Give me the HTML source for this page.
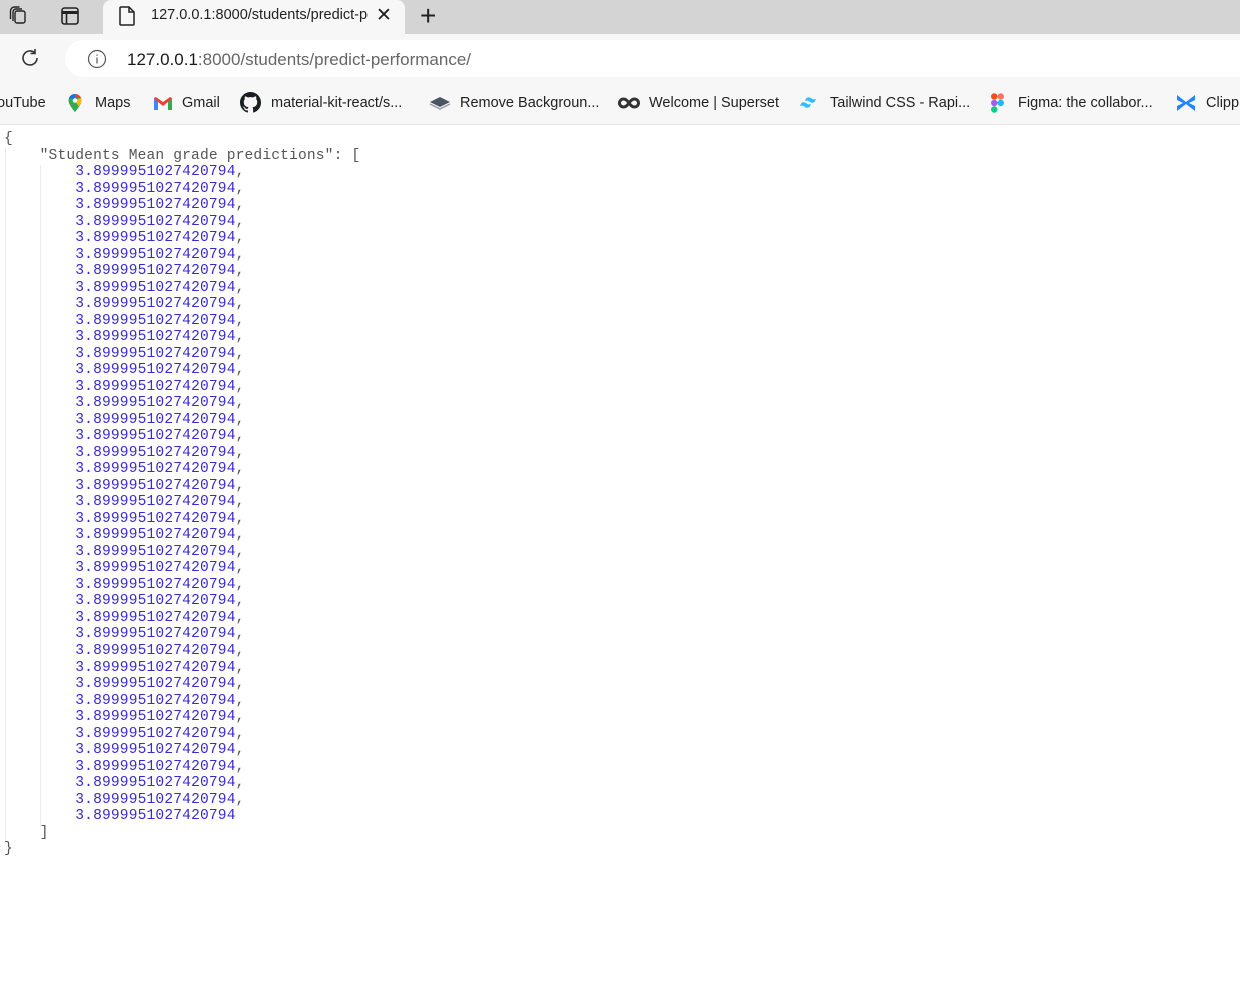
<!DOCTYPE html>
<html><head><meta charset="utf-8"><style>
*{margin:0;padding:0;box-sizing:border-box}
body{width:1240px;height:981px;overflow:hidden;background:#fff;font-family:"Liberation Sans",sans-serif;position:relative}
.tabbar{position:absolute;left:0;top:0;width:1240px;height:34px;background:#d4d4d4}
.tab{position:absolute;left:103px;top:0;width:302px;height:36px;background:#f7f7f7;border-radius:8px 8px 0 0}
.toolbar{position:absolute;left:0;top:34px;width:1240px;height:91px;background:#f7f7f7;border-bottom:1px solid #e6e6e6}
.addr{position:absolute;left:65px;top:40px;width:1200px;height:37px;background:#fff;border-radius:19px}
.t{position:absolute;font-size:15px;color:#222;white-space:nowrap}
.bm{position:absolute;top:95px;font-size:14.5px;color:#222;white-space:nowrap}
pre{position:absolute;left:4px;top:131px;font-family:"Liberation Mono",monospace;font-size:14.6px;line-height:16.51px;color:#555;letter-spacing:0.15px}
.n{color:#3a2ad4}
.g{position:absolute;width:1px;background:#ececec}
</style></head><body>
<div class="tabbar"></div>
<div class="tab"></div>
<svg style="position:absolute;left:7px;top:5px" width="22" height="22" viewBox="0 0 22 22" fill="none" stroke="#222" stroke-width="1.4"><rect x="8" y="6" width="10" height="12" rx="2"/><path d="M6 16 V7 a3 3 0 0 1 3-3 h6"/><path d="M3.5 14 V6 a4 4 0 0 1 4-4 h5"/></svg>
<svg style="position:absolute;left:59px;top:5px" width="22" height="22" viewBox="0 0 22 22" fill="none" stroke="#222" stroke-width="1.6"><rect x="3" y="3" width="16" height="16" rx="2.5"/><path d="M3 7.5h16" stroke-width="3"/><path d="M7.5 8v11"/></svg>
<svg style="position:absolute;left:118px;top:5px" width="18" height="22" viewBox="0 0 18 22" fill="none" stroke="#222" stroke-width="1.5"><path d="M3 2h8l5 5v12a1 1 0 0 1-1 1H3a1 1 0 0 1-1-1V3a1 1 0 0 1 1-1z"/><path d="M11 2v5h5"/></svg>
<div class="t" style="left:151px;top:7px;font-size:14.5px;width:217px;overflow:hidden">127.0.0.1:8000/students/predict-performance</div>
<div class="t" style="left:376px;top:4px;font-size:19px">✕</div>
<div class="t" style="left:420px;top:0px;font-size:28px;font-weight:300">+</div>
<div class="toolbar"></div>
<div class="addr"></div>
<svg style="position:absolute;left:19px;top:47px" width="22" height="22" viewBox="0 0 22 22" fill="none" stroke="#333" stroke-width="1.6"><path d="M18 11a7 7 0 1 1-2.5-5.4"/><path d="M16 2v4.5h-4.5"/></svg>
<svg style="position:absolute;left:87px;top:49px" width="20" height="20" viewBox="0 0 20 20" fill="none" stroke="#555" stroke-width="1.2"><circle cx="10" cy="10" r="8.5"/><path d="M10 8.5v6M10 5.5v1.2"/></svg>
<div class="t" style="left:127px;top:50px;font-size:17px;color:#1a1a1a">127.0.0.1<span style="color:#666">:8000/students/predict-performance/</span></div>
<div class="bm" style="left:-3px">ouTube</div>
<svg style="position:absolute;left:67px;top:93px" width="16" height="20" viewBox="0 0 16 20"><path d="M8 1a6.5 6.5 0 0 0-6.5 6.5c0 4.5 6.5 11.5 6.5 11.5s6.5-7 6.5-11.5A6.5 6.5 0 0 0 8 1z" fill="#34a853"/><path d="M2 5a6.5 6.5 0 0 1 6-4v6z" fill="#1a73e8"/><path d="M8 1a6.5 6.5 0 0 1 6 4H8z" fill="#ea4335"/><path d="M14 5c.5 1 .5 2 .5 2.5 0 2-1.5 4-3 6L8 7z" fill="#fbbc04"/><circle cx="8" cy="7.5" r="2.3" fill="#fff"/></svg>
<div class="bm" style="left:95px">Maps</div>
<svg style="position:absolute;left:153px;top:96px" width="20" height="15" viewBox="0 0 20 15"><path d="M1 2v12h4V6l5 4 5-4v8h4V2l-2-1-7 5-7-5z" fill="#ea4335"/><path d="M1 2v12h4V6z" fill="#4285f4"/><path d="M15 6v8h4V2z" fill="#34a853"/></svg>
<div class="bm" style="left:182px">Gmail</div>
<svg style="position:absolute;left:240px;top:92px" width="21" height="21" viewBox="0 0 16 16"><path fill="#1b1f23" d="M8 0C3.580 0 0 3.58 0 8c0 3.54 2.29 6.53 5.47 7.59.4.07.55-.17.55-.38v-1.33c-2.230.48-2.7-1.07-2.7-1.07-.36-.92-.89-1.17-.89-1.170-.73-.5.05-.49.05-.49.8.06 1.23.83 1.23.83.71 1.22 1.87.87 2.33.66.07-.52.28-.87.5-1.07-1.78-.2-3.64-.89-3.64-3.95 0-.87.31-1.59.82-2.15-.08-.2-.36-1.02.08-2.12 0 0 .67-.21 2.2.82a7.6 7.6 0 0 1 4 0c1.53-1.04 2.2-.82 2.2-.82.44 1.1.16 1.92.08 2.12.51.56.82 1.27.82 2.15 0 3.07-1.87 3.75-3.65 3.95.29.25.54.73.54 1.48v2.2c0 .21.15.46.55.38A8 8 0 0 0 16 8c0-4.42-3.58-8-8-8z"/></svg>
<div class="bm" style="left:271px">material-kit-react/s...</div>
<svg style="position:absolute;left:429px;top:96px" width="22" height="14" viewBox="0 0 22 14"><path d="M11 1L21 6 11 11 1 6z" fill="#4a5560"/><path d="M1 8l10 5 10-5" fill="none" stroke="#99a" stroke-width="1.5"/></svg>
<div class="bm" style="left:460px">Remove Backgroun...</div>
<svg style="position:absolute;left:618px;top:97px" width="22" height="12" viewBox="0 0 22 12" fill="none" stroke="#333" stroke-width="3"><path d="M11 6C9 3 7.5 2 5.5 2a4 4 0 0 0 0 8c2 0 3.5-1 5.5-4s3.5-4 5.5-4a4 4 0 0 1 0 8c-2 0-3.5-1-5.5-4z"/></svg>
<div class="bm" style="left:649px">Welcome | Superset</div>
<svg style="position:absolute;left:799px;top:96px" width="22" height="14" viewBox="0 0 22 14" fill="#38bdf8"><path d="M6 5c1-4 3.5-4.5 6-3 1.5 1 2.5 2 5 1-1 4-3.5 4.5-6 3-1.5-1-2.5-2-5-1zM1 10c1-4 3.5-4.5 6-3 1.5 1 2.5 2 5 1-1 4-3.5 4.5-6 3-1.5-1-2.5-2-5-1z"/></svg>
<div class="bm" style="left:830px">Tailwind CSS - Rapi...</div>
<svg style="position:absolute;left:991px;top:93px" width="13" height="20" viewBox="0 0 12 18"><rect x="0" y="0" width="6" height="6" rx="3" fill="#f24e1e"/><rect x="6" y="0" width="6" height="6" rx="3" fill="#ff7262"/><rect x="0" y="6" width="6" height="6" rx="3" fill="#a259ff"/><circle cx="9" cy="9" r="3" fill="#1abcfe"/><rect x="0" y="12" width="6" height="6" rx="3" fill="#0acf83"/></svg>
<div class="bm" style="left:1018px">Figma: the collabor...</div>
<svg style="position:absolute;left:1175px;top:92px" width="22" height="22" viewBox="0 0 22 22"><path d="M2 3l9 7 9-7v5l-6 3 6 3v5l-9-7-9 7v-5l6-3-6-3z" fill="#2684ff"/></svg>
<div class="bm" style="left:1206px">Clipp</div>
<div class="g" style="left:40px;top:165px;height:662px"></div>
<div class="g" style="left:5px;top:148px;height:696px"></div>
<pre>{
    "Students Mean grade predictions": [
        <span class="n">3.8999951027420794</span>,
        <span class="n">3.8999951027420794</span>,
        <span class="n">3.8999951027420794</span>,
        <span class="n">3.8999951027420794</span>,
        <span class="n">3.8999951027420794</span>,
        <span class="n">3.8999951027420794</span>,
        <span class="n">3.8999951027420794</span>,
        <span class="n">3.8999951027420794</span>,
        <span class="n">3.8999951027420794</span>,
        <span class="n">3.8999951027420794</span>,
        <span class="n">3.8999951027420794</span>,
        <span class="n">3.8999951027420794</span>,
        <span class="n">3.8999951027420794</span>,
        <span class="n">3.8999951027420794</span>,
        <span class="n">3.8999951027420794</span>,
        <span class="n">3.8999951027420794</span>,
        <span class="n">3.8999951027420794</span>,
        <span class="n">3.8999951027420794</span>,
        <span class="n">3.8999951027420794</span>,
        <span class="n">3.8999951027420794</span>,
        <span class="n">3.8999951027420794</span>,
        <span class="n">3.8999951027420794</span>,
        <span class="n">3.8999951027420794</span>,
        <span class="n">3.8999951027420794</span>,
        <span class="n">3.8999951027420794</span>,
        <span class="n">3.8999951027420794</span>,
        <span class="n">3.8999951027420794</span>,
        <span class="n">3.8999951027420794</span>,
        <span class="n">3.8999951027420794</span>,
        <span class="n">3.8999951027420794</span>,
        <span class="n">3.8999951027420794</span>,
        <span class="n">3.8999951027420794</span>,
        <span class="n">3.8999951027420794</span>,
        <span class="n">3.8999951027420794</span>,
        <span class="n">3.8999951027420794</span>,
        <span class="n">3.8999951027420794</span>,
        <span class="n">3.8999951027420794</span>,
        <span class="n">3.8999951027420794</span>,
        <span class="n">3.8999951027420794</span>,
        <span class="n">3.8999951027420794</span>
    ]
}</pre>
</body></html>
